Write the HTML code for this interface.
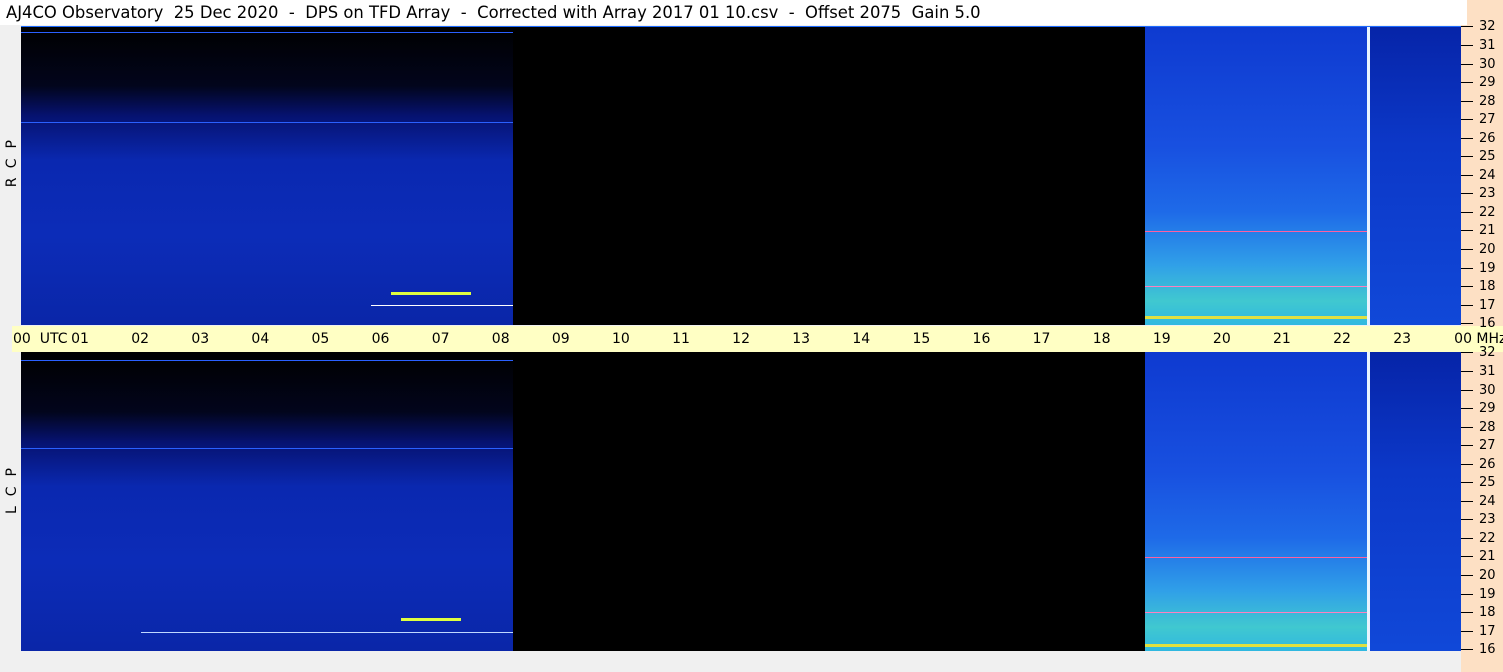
<!DOCTYPE html>
<html><head><style>
body{margin:0;width:1503px;height:672px;background:#f0f0f0;position:relative;overflow:hidden;font-family:"DejaVu Sans","Liberation Sans",sans-serif}
.title{position:absolute;left:0;top:0;width:1461px;height:25px;background:#fff;font-size:16.4px;line-height:26px;padding-left:6px;white-space:pre;color:#000}
.side{position:absolute;left:1461px;top:0;width:42px;height:672px;background:#fde0c4}
.band{position:absolute;left:12px;top:326px;width:1491px;height:26px;background:#ffffc4}
.panel{position:absolute;left:21px;width:1440px;height:299px;background:#000;overflow:hidden}
.l{position:absolute;left:0;top:0;width:492px;height:100%;background:linear-gradient(180deg,#000 0%,#02051c 20%,#061270 30%,#0a28b0 45%,#0c2cb8 70%,#0a26a8 100%)}
.r{position:absolute;left:1124px;top:0;width:316px;height:100%;background:linear-gradient(180deg,#0e3ad0 0%,#1850e0 40%,#1e6ae8 62%,#30a0e8 80%,#40c8d0 92%,#30b8e0 100%)}
.r2{position:absolute;left:1349px;top:0;width:91px;height:100%;background:linear-gradient(180deg,#0624a8 0%,#0c38c8 40%,#1048d8 100%)}
.vl{position:absolute;left:1346px;top:0;width:3px;height:100%;background:#e8f4ff}
.hl{position:absolute;height:1px;background:#2a60ff}
.lbl{position:absolute;left:4px;font-size:14px;writing-mode:vertical-rl;transform:rotate(180deg);letter-spacing:10px}
.fq{position:absolute;left:1461px;width:42px;display:flex;flex-direction:column}
.fq div{height:18.56px;display:flex;align-items:center;font-size:13px}
.fq div:before{content:"";width:12px;height:1px;background:#000;margin-right:6px}
.tm{position:absolute;top:326px;left:-10px;display:flex;font-size:14px;height:26px;align-items:center}
.tm div{width:60.1px;text-align:center}
</style></head><body>
<div class="side"></div>
<div class="title">AJ4CO Observatory  25 Dec 2020  -  DPS on TFD Array  -  Corrected with Array 2017 01 10.csv  -  Offset 2075  Gain 5.0</div>
<div class="band"></div>
<div class="panel" style="top:26px">
<div class="l"></div><div class="r"></div><div class="r2"></div><div class="vl"></div>
<div class="hl" style="left:0;width:492px;top:6px"></div>
<div class="hl" style="left:0;width:492px;top:96px"></div>
<div class="hl" style="left:350px;width:142px;top:279px;background:#fff"></div>
<div class="hl" style="left:370px;width:80px;top:266px;height:3px;background:#e0ff40"></div>
<div class="hl" style="left:1124px;width:222px;top:205px;background:#ff60a0"></div>
<div class="hl" style="left:1124px;width:222px;top:260px;background:#ff80c0"></div>
<div class="hl" style="left:1124px;width:222px;top:290px;height:3px;background:#e0e040"></div>
<div class="hl" style="left:0;width:1440px;top:0;background:#1c6aff"></div>
</div>
<div class="panel" style="top:352px">
<div class="l"></div><div class="r"></div><div class="r2"></div><div class="vl"></div>
<div class="hl" style="left:0;width:492px;top:8px"></div>
<div class="hl" style="left:0;width:492px;top:96px"></div>
<div class="hl" style="left:120px;width:372px;top:280px;background:#c0d8ff"></div>
<div class="hl" style="left:380px;width:60px;top:266px;height:3px;background:#e0ff40"></div>
<div class="hl" style="left:1124px;width:222px;top:205px;background:#ff60a0"></div>
<div class="hl" style="left:1124px;width:222px;top:260px;background:#ff80c0"></div>
<div class="hl" style="left:1124px;width:222px;top:292px;height:3px;background:#e0e040"></div>
</div>
<div class="lbl" style="top:130px">RCP</div>
<div class="lbl" style="top:458px">LCP</div>
<div class="fq" style="top:17.7px"><div>32</div><div>31</div><div>30</div><div>29</div><div>28</div><div>27</div><div>26</div><div>25</div><div>24</div><div>23</div><div>22</div><div>21</div><div>20</div><div>19</div><div>18</div><div>17</div><div>16</div></div>
<div class="fq" style="top:343.7px"><div>32</div><div>31</div><div>30</div><div>29</div><div>28</div><div>27</div><div>26</div><div>25</div><div>24</div><div>23</div><div>22</div><div>21</div><div>20</div><div>19</div><div>18</div><div>17</div><div>16</div></div>
<div class="tm"><div style="width:83px;text-align:left;padding-left:23px;box-sizing:border-box;white-space:nowrap;margin-right:-23px">00&nbsp;&nbsp;UTC</div><div>01</div><div>02</div><div>03</div><div>04</div><div>05</div><div>06</div><div>07</div><div>08</div><div>09</div><div>10</div><div>11</div><div>12</div><div>13</div><div>14</div><div>15</div><div>16</div><div>17</div><div>18</div><div>19</div><div>20</div><div>21</div><div>22</div><div>23</div><div style="text-align:left;padding-left:22px;white-space:nowrap">00&nbsp;MHz</div></div>
</body></html>
